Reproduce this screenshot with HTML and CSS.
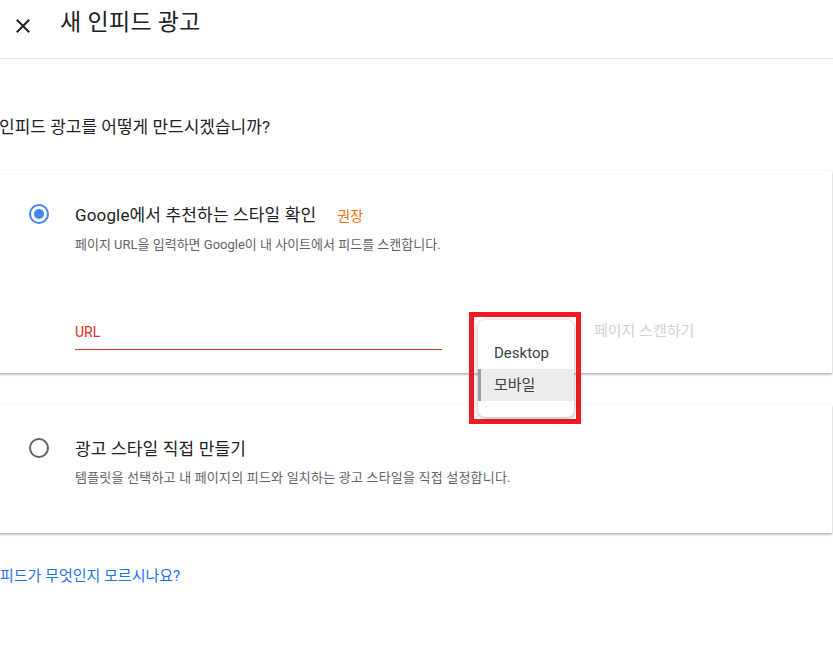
FILE: index.html
```html
<!DOCTYPE html>
<html lang="ko">
<head>
<meta charset="utf-8">
<title>새 인피드 광고</title>
<link rel="stylesheet" href="styles.css">
</head>
<body>
<header class="topbar">
  <button class="close" aria-label="닫기">
    <svg width="14" height="14" viewBox="0 0 14 14"><path d="M1.5 1.5L12.5 12.5M12.5 1.5L1.5 12.5" stroke="#202124" stroke-width="2" stroke-linecap="square"/></svg>
  </button>
  <h1 class="title">새 인피드 광고</h1>
</header>
<main class="main">
  <h2 class="question">인피드 광고를 어떻게 만드시겠습니까?</h2>

  <section class="card card-first">
    <div class="option">
      <span class="radio radio-on"><span class="dot"></span></span>
      <div class="option-body">
        <div class="option-title">Google에서 추천하는 스타일 확인<span class="badge">권장</span></div>
        <div class="option-desc">페이지 URL을 입력하면 Google이 내 사이트에서 피드를 스캔합니다.</div>
        <div class="field-row">
          <div class="field">
            <div class="field-label">URL</div>
            <div class="field-line"></div>
          </div>
          <span class="scan">페이지 스캔하기</span>
        </div>
      </div>
    </div>
  </section>

  <section class="card card-second">
    <div class="option">
      <span class="radio radio-off"></span>
      <div class="option-body">
        <div class="option-title">광고 스타일 직접 만들기</div>
        <div class="option-desc option-desc-wide">템플릿을 선택하고 내 페이지의 피드와 일치하는 광고 스타일을 직접 설정합니다.</div>
      </div>
    </div>
  </section>

  <a class="help" href="#">피드가 무엇인지 모르시나요?</a>
</main>

<div class="highlight">
  <ul class="menu">
    <li class="menu-item">Desktop</li>
    <li class="menu-item selected">모바일</li>
  </ul>
</div>
</body>
</html>
```

FILE: styles.css
```css
html, body {
  margin: 0;
  padding: 0;
  background: #fff;
  overflow: hidden;
}
body {
  font-family: Roboto, "Noto Sans CJK KR", sans-serif;
  color: #202124;
  width: 833px;
  height: 657px;
  position: relative;
}
.topbar {
  height: 59px;
  box-sizing: border-box;
  border-bottom: 1px solid #e0e0e0;
  display: flex;
  align-items: flex-start;
}
.close {
  border: 0;
  background: none;
  padding: 0;
  margin: 19px 0 0 16px;
  width: 14px;
  height: 14px;
  display: flex;
}
.title {
  margin: 8px 0 0 30px;
  font-size: 23px;
  font-weight: 400;
  line-height: 30px;
  color: #202124;
  letter-spacing: 0.3px;
}
.main {
  margin-left: -24px;
  width: 856px;
}
.question {
  margin: 56px 0 0 0;
  padding-left: 23px;
  font-size: 17px;
  font-weight: 400;
  line-height: 24px;
  color: #202124;
}
.card {
  background: #fff;
  box-shadow: 0 2px 2px rgba(0, 0, 0, 0.24), 0 0 2px rgba(0, 0, 0, 0.1);
  box-sizing: border-box;
  padding: 32px 24px 0 53px;
}
.card-first {
  margin-top: 32px;
  height: 202px;
}
.card-second {
  margin-top: 32px;
  height: 128px;
}
.option {
  display: flex;
  align-items: flex-start;
}
.radio {
  width: 20px;
  height: 20px;
  box-sizing: border-box;
  border-radius: 50%;
  border: 2px solid #5f6368;
  flex: none;
  margin-top: 1px;
  display: flex;
  align-items: center;
  justify-content: center;
}
.radio-on {
  border-color: #4285f4;
}
.dot {
  width: 10px;
  height: 10px;
  border-radius: 50%;
  background: #4285f4;
}
.option-body {
  margin-left: 26px;
}
.option-title {
  font-size: 17px;
  line-height: 24px;
  color: #202124;
  letter-spacing: 0.15px;
}
.badge {
  color: #e8710a;
  font-size: 14px;
  margin-left: 21px;
  letter-spacing: 0;
}
.option-desc {
  margin-top: 8px;
  font-size: 13px;
  line-height: 18px;
  color: #5f6368;
}
.option-desc-wide {
  letter-spacing: 0.2px;
}
.field-row {
  display: flex;
  align-items: flex-start;
  margin-top: 68px;
}
.field {
  width: 367px;
}
.field-label {
  font-size: 14px;
  line-height: 20px;
  height: 20px;
  color: #d93025;
}
.field-line {
  margin-top: 7px;
  height: 1px;
  background: #d93025;
}
.scan {
  margin-left: 152px;
  margin-top: -1px;
  font-size: 15px;
  line-height: 20px;
  color: #cfd1d4;
}
.help {
  display: block;
  margin-top: 33px;
  padding-left: 24px;
  font-size: 15px;
  line-height: 20px;
  color: #1a73e8;
  text-decoration: none;
}
.highlight {
  position: absolute;
  left: 469px;
  top: 312px;
  width: 112px;
  height: 112px;
  box-sizing: border-box;
  border: 5px solid #ed1c24;
}
.menu {
  position: absolute;
  left: 4px;
  top: 3px;
  width: 96px;
  height: 97px;
  margin: 0;
  padding: 17px 0 0 0;
  box-sizing: border-box;
  list-style: none;
  background: #fff;
  border-radius: 7px;
  box-shadow: 0 1px 4px rgba(0, 0, 0, 0.35);
}
.menu-item {
  height: 32px;
  line-height: 32px;
  padding-left: 16px;
  font-size: 15px;
  color: #3c4043;
  box-sizing: border-box;
}
.menu-item.selected {
  background: #ececec;
  border-left: 3px solid #9e9e9e;
  padding-left: 13px;
}
```
